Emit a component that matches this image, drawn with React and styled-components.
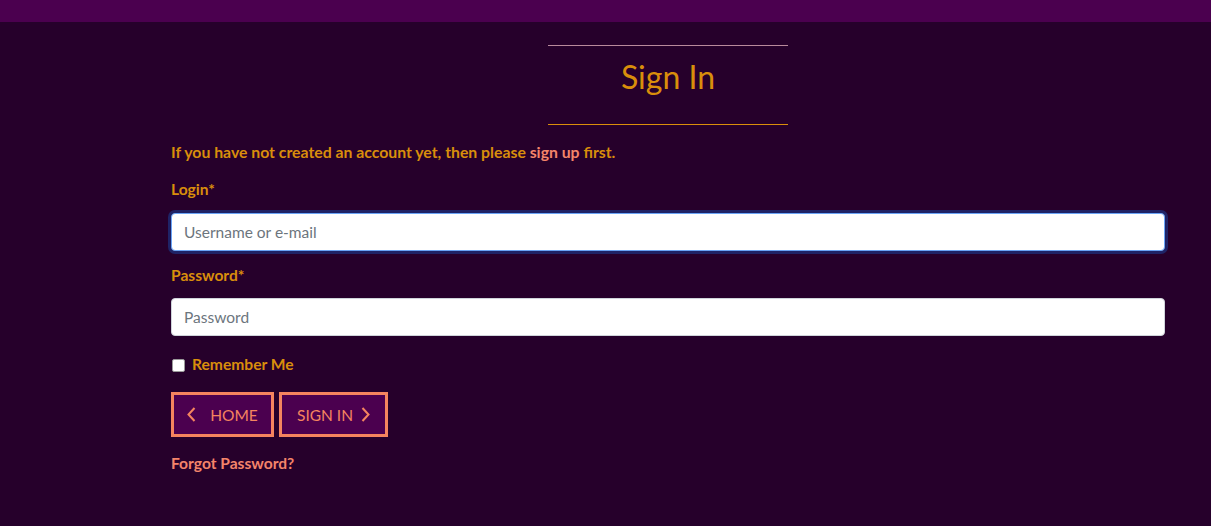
import React from "react";
import styled, { createGlobalStyle } from "styled-components";

const Global = createGlobalStyle`
  html, body { margin: 0; padding: 0; background: #26002b; }
  body { font-family: Lato, "Open Sans", sans-serif; }
  * { box-sizing: border-box; }
`;

const TopBar = styled.header`
  height: 22px;
  background: #4b004f;
`;

const Main = styled.main`
  padding: 23px 46px 40px 171px;
  color: #d98e0b;
  min-height: 504px;
`;

const TitleBlock = styled.div`
  width: 240px;
  margin: 0 auto;
  border-top: 1px solid #b98a9c;
  border-bottom: 1px solid #d98e0b;
  padding: 14px 0 30px;
  text-align: center;
`;

const Title = styled.h1`
  margin: 0;
  font-size: 32px;
  line-height: 34px;
  font-weight: 400;
  color: #d98e0b;
`;

const Intro = styled.p`
  margin: 16px 0 0;
  font-size: 15.8px;
  line-height: 21px;
  font-weight: 700;
`;

const Link = styled.a`
  color: #f4846a;
  text-decoration: none;
`;

const Label = styled.label`
  display: block;
  margin: ${(p) => p.$top}px 0 0;
  font-size: 15.6px;
  line-height: 21px;
  font-weight: 700;
`;

const Input = styled.input`
  display: block;
  width: 100%;
  height: 38px;
  margin-top: ${(p) => p.$top}px;
  padding: 0 12px;
  border: 1px solid ${(p) => (p.$focused ? "#6aa4f6" : "#cfd4da")};
  border-radius: 4px;
  background: #fff;
  font-family: Lato, sans-serif;
  font-size: 15.5px;
  color: #333;
  box-shadow: ${(p) => (p.$focused ? "0 0 0 3px #1f2366" : "none")};
  outline: none;
  &::placeholder { color: #6c757d; }
`;

const CheckRow = styled.div`
  display: flex;
  align-items: center;
  gap: 7px;
  margin-top: 17px;
  height: 21px;
  font-size: 15.6px;
  font-weight: 700;
`;

const Check = styled.span`
  width: 13px;
  height: 13px;
  margin: 3px 0 0 1px;
  background: #fff;
  border-radius: 2px;
  border: 1px solid #9a9a9a;
`;

const Buttons = styled.div`
  display: flex;
  gap: 5px;
  margin-top: 18px;
`;

const Button = styled.button`
  display: flex;
  align-items: center;
  justify-content: center;
  gap: ${(p) => p.$gap}px;
  width: ${(p) => p.$w}px;
  height: 45px;
  border: 3px solid #f5845f;
  background: #4b004f;
  color: #f5845f;
  font-family: Lato, sans-serif;
  font-size: 15.5px;
  font-weight: 400;
  text-transform: uppercase;
  padding: 0;
  cursor: pointer;
`;

const Forgot = styled.a`
  display: block;
  margin-top: 16px;
  color: #f4846a;
  font-size: 15.6px;
  line-height: 21px;
  font-weight: 700;
  text-decoration: none;
`;

const Chevron = ({ dir }) => (
  <svg width="9" height="15" viewBox="0 0 9 15" fill="none">
    <path
      d={dir === "left" ? "M7.5 1 L1.5 7.5 L7.5 14" : "M1.5 1 L7.5 7.5 L1.5 14"}
      stroke="#f5845f"
      strokeWidth="2"
    />
  </svg>
);

export default function App() {
  return (
    <>
      <Global />
      <TopBar />
      <Main>
        <TitleBlock>
          <Title>Sign In</Title>
        </TitleBlock>
        <Intro>
          If you have not created an account yet, then please <Link href="#">sign up</Link> first.
        </Intro>
        <Label $top={17}>Login*</Label>
        <Input $top={13} $focused placeholder="Username or e-mail" />
        <Label $top={14}>Password*</Label>
        <Input $top={12} type="password" placeholder="Password" />
        <CheckRow>
          <Check />
          Remember Me
        </CheckRow>
        <Buttons>
          <Button $w={103} $gap={14}>
            <Chevron dir="left" />
            Home
          </Button>
          <Button $w={109} $gap={8}>
            Sign In
            <Chevron dir="right" />
          </Button>
        </Buttons>
        <Forgot href="#">Forgot Password?</Forgot>
      </Main>
    </>
  );
}
